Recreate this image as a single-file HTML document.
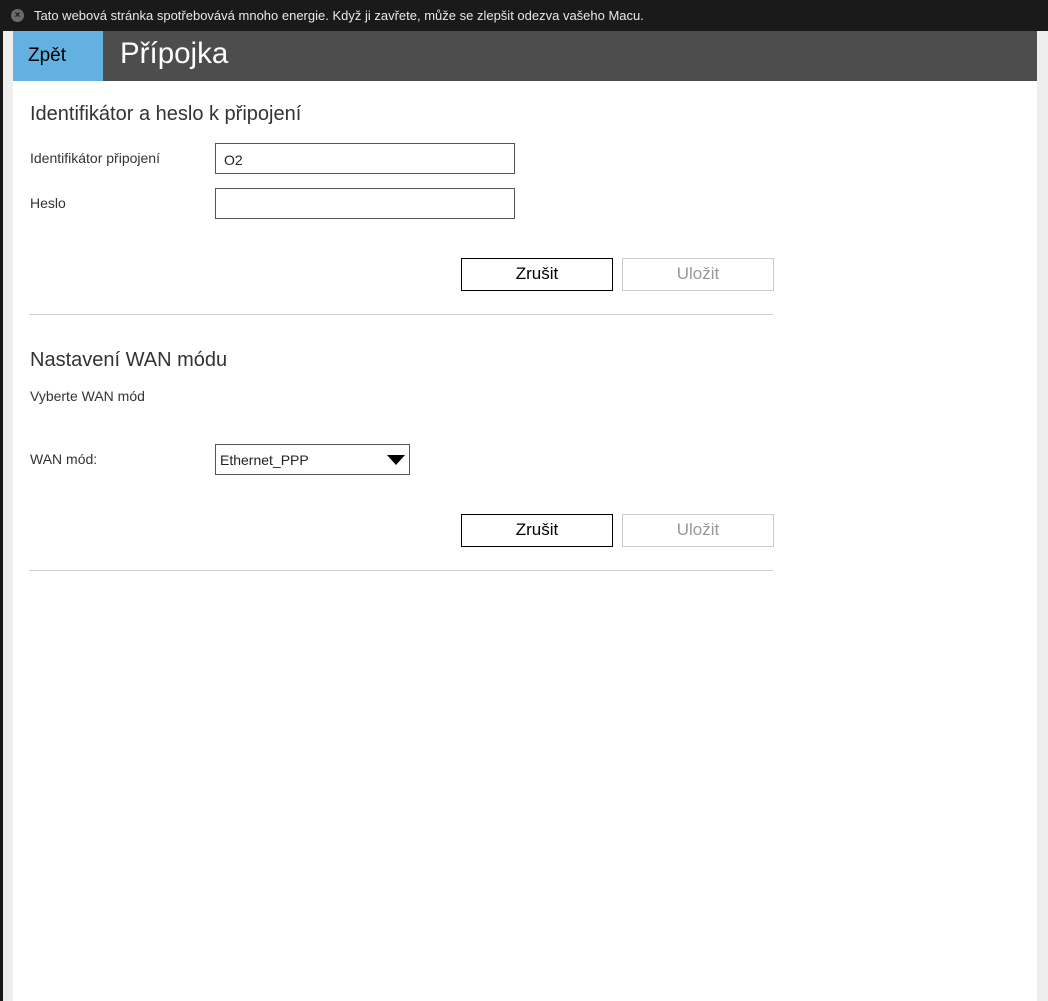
<!DOCTYPE html>
<html><head><meta charset="utf-8"><style>
*{margin:0;padding:0;box-sizing:border-box}
body{width:1048px;height:1001px;overflow:hidden;background:#eeeeee;font-family:"Liberation Sans",Arial,sans-serif;position:relative;color:#333}
.top{position:absolute;left:0;top:0;width:1048px;height:31px;background:#1a1a1a;color:#e8e8e8;font-size:13px}
.top .x{position:absolute;left:11px;top:9px;width:13px;height:13px;border-radius:50%;background:#6b6b6b;color:#1a1a1a;font-size:10px;line-height:13px;text-align:center;font-weight:bold}
.top span.t{position:absolute;left:34px;top:8px}
.ledge{position:absolute;left:0;top:31px;width:3px;height:970px;background:#1a1a1a}
.page{position:absolute;left:13px;top:31px;width:1024px;height:970px;background:#fff}
.hdr{position:absolute;left:0;top:0;width:1024px;height:50px;background:#4d4d4d}
.back{position:absolute;left:0;top:0;width:90px;height:50px;background:#62b1e0;color:#000;font-size:19px;line-height:50px;padding-left:15px}
.title{position:absolute;left:107px;top:6px;color:#fff;font-size:29.5px}
.abs{position:absolute}
h2{position:absolute;font-weight:normal;font-size:20px;color:#333}
.lbl{position:absolute;font-size:14px;color:#333}
.inp{position:absolute;border:1px solid #555;height:31px;font-size:14px;padding:8px 8px;color:#222}
.btn{position:absolute;width:152px;height:33px;border:1px solid #000;font-size:17px;text-align:center;line-height:30px;color:#000}
.btn.dis{border-color:#ccc;color:#999}
.hr{position:absolute;left:16px;width:744px;height:1px;background:#cfcfcf}
</style></head><body>
<div class="top"><div class="x">×</div><span class="t">Tato webová stránka spotřebovává mnoho energie. Když ji zavřete, může se zlepšit odezva vašeho Macu.</span></div>
<div class="ledge"></div>
<div class="page">
<div class="hdr"><div class="back">Zpět</div><div class="title">Přípojka</div></div>
<h2 style="left:17px;top:72px">Identifikátor a heslo k připojení</h2>
<div class="lbl" style="left:17px;top:119px">Identifikátor připojení</div>
<div class="inp" style="left:202px;top:112px;width:300px">O2</div>
<div class="lbl" style="left:17px;top:164px">Heslo</div>
<div class="inp" style="left:202px;top:157px;width:300px"></div>
<div class="btn" style="left:448px;top:227px">Zrušit</div>
<div class="btn dis" style="left:609px;top:227px">Uložit</div>
<div class="hr" style="top:283px"></div>
<h2 style="left:17px;top:318px">Nastavení WAN módu</h2>
<div class="lbl" style="left:17px;top:357px">Vyberte WAN mód</div>
<div class="lbl" style="left:17px;top:420px">WAN mód:</div>
<div class="inp" style="left:202px;top:413px;width:195px;padding:7px 4px">Ethernet_PPP
<svg class="abs" style="right:4px;top:10px" width="18" height="11"><path d="M0 0H18L9 10Z" fill="#000"/></svg></div>
<div class="btn" style="left:448px;top:483px">Zrušit</div>
<div class="btn dis" style="left:609px;top:483px">Uložit</div>
<div class="hr" style="top:539px"></div>
</div>
</body></html>
